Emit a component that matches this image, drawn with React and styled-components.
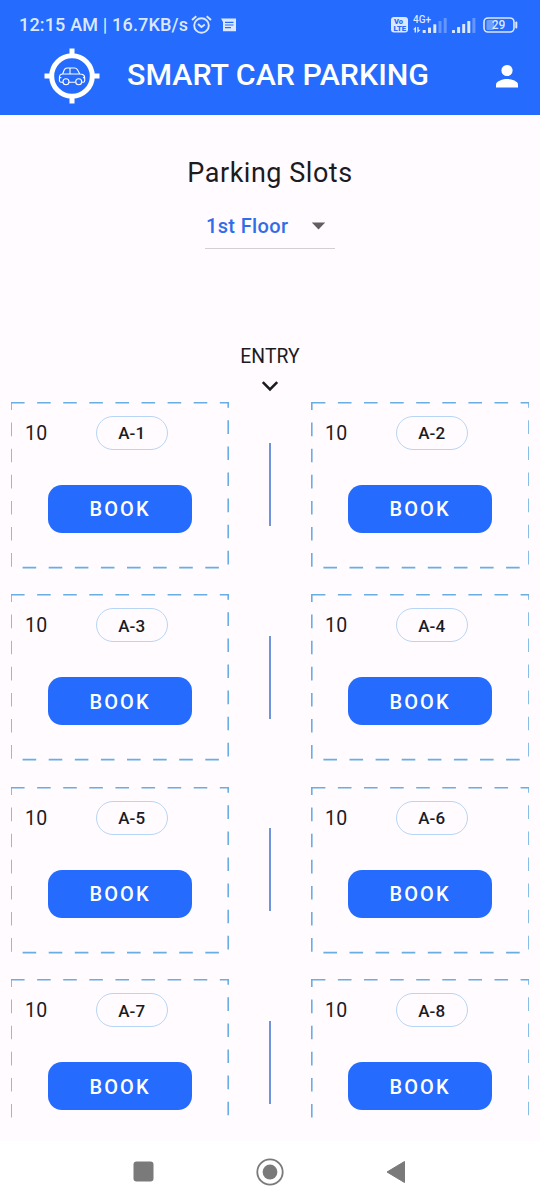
import React from 'react';
import styled, { createGlobalStyle } from 'styled-components';

const GlobalStyle = createGlobalStyle`
  * { box-sizing: border-box; }
  body { margin: 0; background: #fffbff; font-family: Roboto, sans-serif; color: #1c1b1f; }
`;

const Screen = styled.div`
  width: 540px;
  height: 1204px;
  display: flex;
  flex-direction: column;
  overflow: hidden;
  background: #fffbff;
`;

const Header = styled.header`
  height: 115px;
  flex: none;
  background: #246bfe;
  color: #fff;
`;

const StatusBar = styled.div`
  height: 48px;
  padding: 1px 22px 0 19px;
  display: flex;
  align-items: center;
  color: #dce8ff;
  svg { display: block; flex: none; }
`;

const Clock = styled.span`
  width: 172px;
  font-size: 18px;
  font-weight: 500;
  letter-spacing: 0.17px;
  white-space: nowrap;
`;

const StatusIcons = styled.div`
  display: flex;
  align-items: center;
  gap: ${(p) => p.$gap}px;
  margin-left: ${(p) => (p.$end ? 'auto' : '0')};
`;

const NetworkLabel = styled.text`
  font: 500 10px Roboto, sans-serif;
  fill: #dce8ff;
`;

const VoLteLabel = styled.text`
  font: 900 7px Roboto, sans-serif;
  fill: #246bfe;
`;

const BatteryLabel = styled.text`
  font: 500 12px Roboto, sans-serif;
  fill: #dce8ff;
`;

const AppBar = styled.div`
  height: 56px;
  padding: 0 20px 0 44px;
  display: flex;
  align-items: center;
  svg { display: block; flex: none; }
`;

const AppTitle = styled.h1`
  margin: 0 auto 2px 27px;
  font-size: 30.4px;
  font-weight: 500;
  line-height: 54px;
  white-space: nowrap;
`;

const Main = styled.main`
  height: 1003px;
  flex: none;
  overflow: hidden;
  display: flex;
  flex-direction: column;
  align-items: center;
  > * { flex: none; }
`;

const Heading = styled.h2`
  margin: 40px 0 0;
  font-size: 27px;
  font-weight: 400;
  line-height: 36px;
  letter-spacing: 0.52px;
`;

const FloorSelect = styled.div`
  margin-top: 15px;
  width: 130px;
  height: 43px;
  padding: 0 9px 3px 1px;
  border-bottom: 1px solid #d3d0d4;
  display: flex;
  align-items: center;
  justify-content: space-between;
  font-size: 20px;
  font-weight: 500;
  letter-spacing: 0.35px;
  color: #2f6ee8;
`;

const Entry = styled.div`
  margin-top: 95px;
  height: 57.7px;
  display: flex;
  flex-direction: column;
  align-items: center;
  font-size: 19.3px;
  line-height: 26px;
  letter-spacing: 0.1px;
`;

const EntryArrow = styled.svg`
  margin-top: 10px;
`;

const SlotRow = styled.div`
  width: 540px;
  height: 192.5px;
  padding: 0 11px;
  display: flex;
  justify-content: space-between;
`;

const Divider = styled.div`
  width: 2px;
  height: 83px;
  margin-top: 41.5px;
  background: #7094dc;
`;

const Slot = styled.section`
  width: 218px;
  height: 167px;
  display: grid;
  > * { grid-area: 1 / 1; }
`;

const Outline = styled.svg`
  display: block;
`;

const SlotBody = styled.div`
  padding: 14px 37px 0 14px;
`;

const SlotTop = styled.div`
  height: 34px;
  display: flex;
  align-items: center;
`;

const SlotTime = styled.span`
  width: 71px;
  padding-top: 1.6px;
  font-size: 19.5px;
  letter-spacing: 0.3px;
`;

const SlotName = styled.span`
  width: 71.5px;
  height: 34px;
  border: 1px solid #b6d6f5;
  border-radius: 17px;
  display: flex;
  align-items: center;
  justify-content: center;
  padding-top: 1px;
  font-size: 17px;
  font-weight: 500;
  letter-spacing: 0.1px;
`;

const BookButton = styled.button`
  display: block;
  width: 144.5px;
  height: 48px;
  margin: 35px 0 0 22.8px;
  padding: 0.8px 0 0;
  border: 0;
  border-radius: 14px;
  background: #246bfe;
  color: #fff;
  font: 500 20px Roboto, sans-serif;
  letter-spacing: 2.1px;
`;

const NavBar = styled.nav`
  margin-top: 23px;
  height: 63px;
  flex: none;
  padding: 0 134px 2px 133px;
  display: flex;
  align-items: center;
  justify-content: space-between;
  background: #fff;
`;

const AlarmIcon = () => (
  <svg width="21" height="20" viewBox="0 0 21 20" fill="none" stroke="#dce8ff" strokeWidth="1.9">
    <circle cx="10.5" cy="10.5" r="7.3" />
    <path d="M1 5 5.3 1.2M20 5 15.7 1.2M7 9l3.5 3 3.3-2.4" />
  </svg>
);

const MessageIcon = () => (
  <svg width="15" height="14" viewBox="0 0 15 14">
    <path fill="#dce8ff" d="M0 .5h15v12.8H2V4z" />
    <path stroke="#246bfe" strokeWidth="1.2" d="M4 4.3h8.5M4 7h8.5M4 9.7h6" />
  </svg>
);

const VoLte = () => (
  <svg width="17" height="16" viewBox="0 0 17 16">
    <rect width="17" height="15.5" rx="3" fill="#dce8ff" />
    <VoLteLabel x="3" y="7" textLength="9" lengthAdjust="spacingAndGlyphs">Vo</VoLteLabel>
    <VoLteLabel x="2.5" y="13.5" textLength="12.5" lengthAdjust="spacingAndGlyphs">LTE</VoLteLabel>
  </svg>
);

const MobileNetwork = () => (
  <svg width="35" height="20" viewBox="0 0 35 20">
    <NetworkLabel x="0" y="8" textLength="18" lengthAdjust="spacingAndGlyphs">4G+</NetworkLabel>
    <path fill="#dce8ff" d="M0 14.6 3 11.5v6H1.6v-2.9zM4.3 12h1.3v2.7h2L4.3 18z" />
    <rect x="9.7" y="15" width="3" height="3" rx=".6" fill="#dce8ff" />
    <rect x="15" y="12.4" width="3" height="5.6" rx=".6" fill="#dce8ff" />
    <rect x="20.3" y="9.2" width="3" height="8.8" rx=".6" fill="#dce8ff" />
    <rect x="25.5" y="5.9" width="3" height="12.1" rx=".6" fill="#dce8ff" opacity=".35" />
    <rect x="30.7" y="2.9" width="3" height="15.1" rx=".6" fill="#dce8ff" opacity=".35" />
  </svg>
);

const SecondSignal = () => (
  <svg width="26" height="18" viewBox="0 0 26 18">
    {[3, 6, 9, 12, 15].map((h, i) => (
      <rect key={h} x={i * 5.1} y={17 - h} width="3" height={h} rx="0.6" fill="#dce8ff" opacity={i < 4 ? 1 : 0.35} />
    ))}
  </svg>
);

const Battery = () => (
  <svg width="35" height="16" viewBox="0 0 35 16">
    <rect x="3.5" y="3" width="7.5" height="10" rx="1.5" fill="#dce8ff" opacity=".4" />
    <rect x="1" y="1" width="30" height="14" rx="4" fill="none" stroke="#dce8ff" strokeWidth="1.6" />
    <path d="M33.3 5.5v5" stroke="#dce8ff" strokeWidth="2" strokeLinecap="round" />
    <BatteryLabel x="15.5" y="12.3" textAnchor="middle">29</BatteryLabel>
  </svg>
);

const Logo = () => (
  <svg width="56" height="56" viewBox="0 0 56 56" fill="none" stroke="#fff">
    <circle cx="28" cy="28" r="20.3" strokeWidth="5" />
    <path strokeWidth="5" d="M28 .5v7M28 48.5v7M.5 28h7M48.5 28h7" />
    <g strokeWidth="1.1" strokeLinejoin="round">
      <path d="M19 34.2h-2q-1.6 0-1.6-1.6v-3q0-3.4 3.2-3.6l1.6-4q.8-2 2.8-2h7.5q1.9 0 2.8 1.6l2.5 4.4 2 .3q2.9.5 2.9 3.4v3q0 1.5-1.5 1.5h-1.5M25.1 34.2h6.5M18.6 26h17.2M26 20v6" />
      <circle cx="22" cy="33.7" r="3" />
      <circle cx="34.7" cy="33.7" r="3" />
      <path d="M15.5 29.6h1.8M39 29.6h1.7" />
    </g>
  </svg>
);

const PersonIcon = () => (
  <svg width="26" height="26" viewBox="0 0 26 26" fill="#fff">
    <circle cx="13" cy="7.5" r="5.6" />
    <path d="M2 24.6v-3c0-3.7 7.3-5.6 11-5.6s11 1.9 11 5.6v3z" />
  </svg>
);

const SlotCard = ({ name, side }) => (
  <Slot>
    <Outline width="218" height="167" viewBox="0 0 218 167">
      <rect x={side === 'left' ? 0 : 0.8} y=".6" width="217.2" height="165" fill="none" stroke="#69aee3" strokeWidth="1.6" strokeDasharray="13.6 12.5" />
    </Outline>
    <SlotBody>
      <SlotTop>
        <SlotTime>10</SlotTime>
        <SlotName>{name}</SlotName>
      </SlotTop>
      <BookButton>BOOK</BookButton>
    </SlotBody>
  </Slot>
);

const rows = [
  ['A-1', 'A-2'],
  ['A-3', 'A-4'],
  ['A-5', 'A-6'],
  ['A-7', 'A-8'],
];

export default function App() {
  return (
    <Screen>
      <GlobalStyle />
      <Header>
        <StatusBar>
          <Clock>12:15 AM | 16.7KB/s</Clock>
          <StatusIcons $gap={8.5}>
            <AlarmIcon />
            <MessageIcon />
          </StatusIcons>
          <StatusIcons $gap={4.7} $end>
            <VoLte />
            <MobileNetwork />
            <SecondSignal />
            <Battery />
          </StatusIcons>
        </StatusBar>
        <AppBar>
          <Logo />
          <AppTitle>SMART CAR PARKING</AppTitle>
          <PersonIcon />
        </AppBar>
      </Header>
      <Main>
        <Heading>Parking Slots</Heading>
        <FloorSelect>
          1st Floor
          <svg width="15" height="8" viewBox="0 0 15 8"><path fill="#625f63" d="M.8.5h13.4L7.500 7.500z" /></svg>
        </FloorSelect>
        <Entry>
          ENTRY
          <EntryArrow width="18" height="12" viewBox="0 0 18 12" fill="none" stroke="#1c1b1f" strokeWidth="2.6">
            <path d="m1.8 2.2 7.200 7.200 7.200-7.200" />
          </EntryArrow>
        </Entry>
        {rows.map(([left, right]) => (
          <SlotRow key={left}>
            <SlotCard name={left} side="left" />
            <Divider />
            <SlotCard name={right} side="right" />
          </SlotRow>
        ))}
      </Main>
      <NavBar>
        <svg width="21" height="21" viewBox="0 0 21 21"><rect x=".5" y=".5" width="20" height="20" rx="3" fill="#7a7a7a" /></svg>
        <svg width="28" height="28" viewBox="0 0 28 28">
          <circle cx="14" cy="14" r="12.7" fill="none" stroke="#7a7a7a" strokeWidth="1.8" />
          <circle cx="14" cy="14" r="7.4" fill="#7a7a7a" />
        </svg>
        <svg width="20" height="24" viewBox="0 0 20 24"><path fill="#7a7a7a" stroke="#7a7a7a" strokeLinejoin="round" d="M1 12 18.5 1.500v21z" /></svg>
      </NavBar>
    </Screen>
  );
}
